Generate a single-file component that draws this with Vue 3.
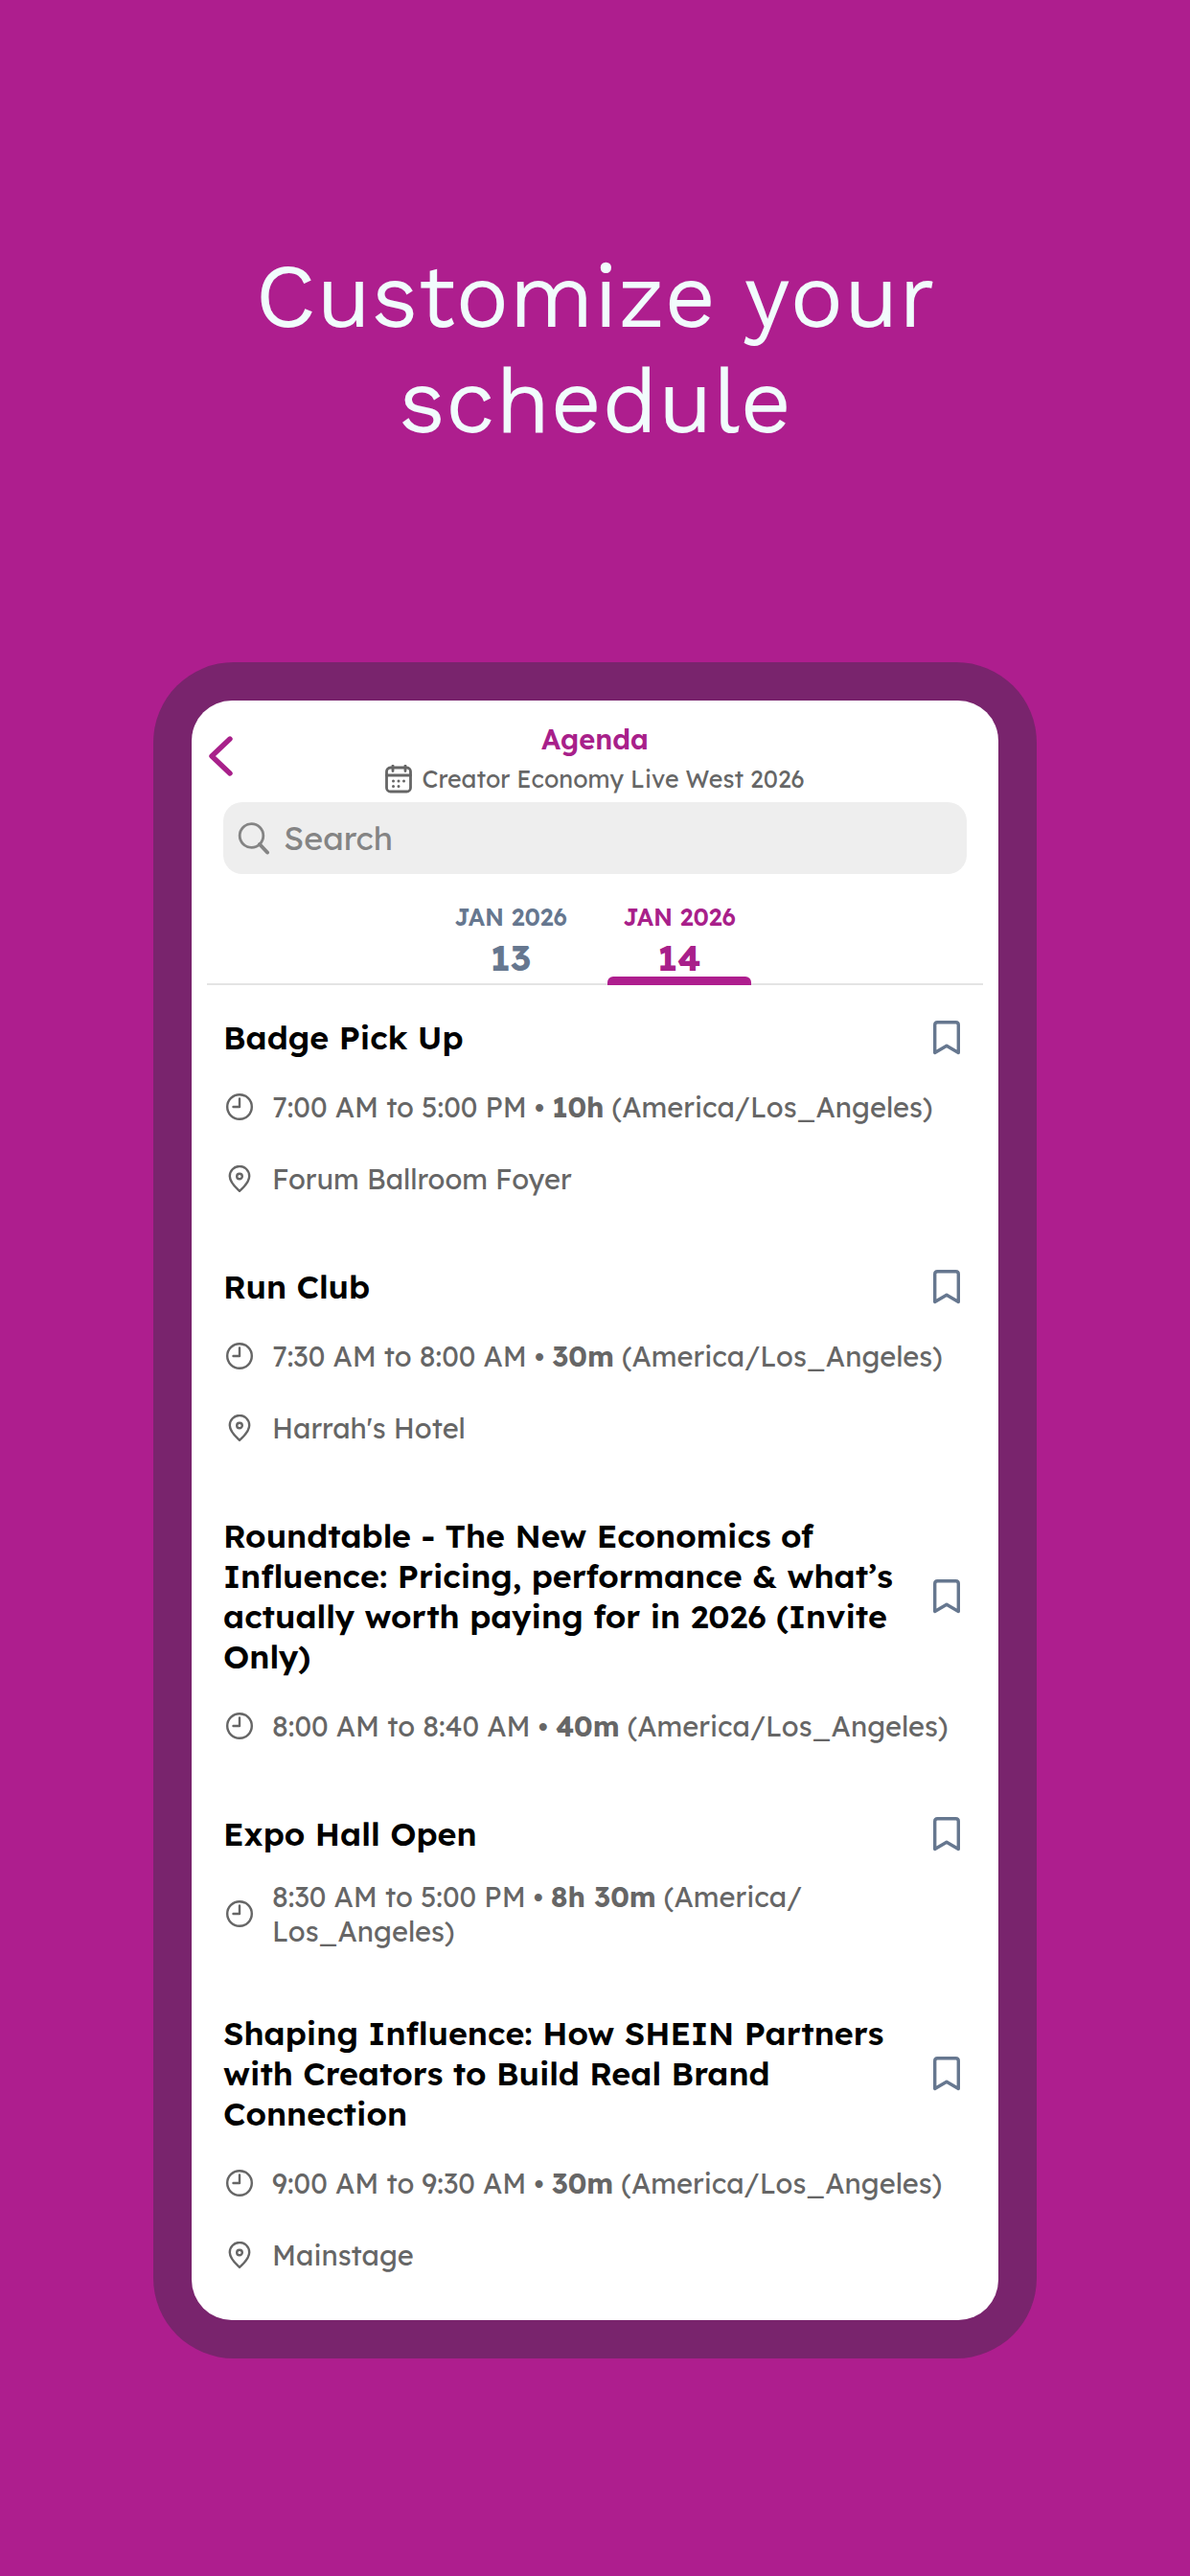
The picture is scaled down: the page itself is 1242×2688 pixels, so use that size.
<template>
  <main class="page">
    <h1 class="headline">Customize your schedule</h1>

    <div class="phone">
      <div class="screen">
        <!-- Header -->
        <header class="header">
          <button class="back" type="button" aria-label="Back">
            <svg class="back-icon" viewBox="0 0 26 42" fill="none">
              <path d="M23 3L4 21L23 39" stroke="currentColor" stroke-width="5.4" stroke-linecap="round" stroke-linejoin="round" />
            </svg>
          </button>
          <div class="header-text">
            <h2 class="header-title">Agenda</h2>
            <p class="event-name">
              <svg class="event-icon" viewBox="0 0 28 30" fill="none">
                <rect x="1.5" y="3" width="25" height="25" rx="4" stroke="currentColor" stroke-width="2.8" />
                <path d="M1.5 11H26.5M8 1V6.5M21 1V6.5" stroke="currentColor" stroke-width="2.8" stroke-linecap="round" />
                <path d="M8.5 17h.01M14 17h.01M19.5 17h.01M8.5 22.5h.01M14 22.5h.01" stroke="currentColor" stroke-width="3" stroke-linecap="round" />
              </svg>
              <span>Creator Economy Live West 2026</span>
            </p>
          </div>
        </header>

        <!-- Search -->
        <label class="search">
          <svg class="search-icon" viewBox="0 0 34 34" fill="none">
            <circle cx="14.5" cy="14" r="12.3" stroke="currentColor" stroke-width="2.8" />
            <path d="M23 23L31 31.5" stroke="currentColor" stroke-width="4" stroke-linecap="round" />
          </svg>
          <input v-model="query" class="search-input" type="text" placeholder="Search" aria-label="Search" />
        </label>

        <!-- Days -->
        <nav class="days">
          <button
            v-for="day in days"
            :key="day.number"
            type="button"
            class="day"
            :class="{ active: day.number === activeDay }"
            @click="activeDay = day.number"
          >
            <span class="day-month">{{ day.month }}</span>
            <span class="day-number">{{ day.number }}</span>
          </button>
        </nav>

        <!-- Sessions -->
        <ul class="sessions">
          <li v-for="session in filteredSessions" :key="session.title" class="session">
            <div class="session-head">
              <h3 class="session-title">{{ session.title }}</h3>
              <button
                type="button"
                class="bookmark"
                :class="{ saved: saved.includes(session.title) }"
                :aria-label="'Bookmark ' + session.title"
                @click="toggleSaved(session.title)"
              >
                <svg class="bookmark-icon" viewBox="0 0 28 36">
                  <path d="M1.7 33.5V4.5Q1.7 1.7 4.5 1.7H23.5Q26.3 1.7 26.3 4.5V33.5L14 26.2Z" stroke="currentColor" stroke-width="3.4" stroke-linejoin="round" />
                </svg>
              </button>
            </div>
            <div class="meta">
              <svg class="meta-icon" viewBox="0 0 28 28" fill="none">
                <circle cx="14" cy="14" r="12.8" stroke="currentColor" stroke-width="2.4" />
                <path d="M14 5.5V14H7.5" stroke="currentColor" stroke-width="2.4" stroke-linecap="round" stroke-linejoin="round" />
              </svg>
              <p class="meta-text">
                {{ session.start }} to {{ session.end }} • <strong>{{ session.duration }}</strong> (America/<wbr />Los_Angeles)
              </p>
            </div>
            <div v-if="session.place" class="meta">
              <svg class="meta-icon" viewBox="0 0 28 28" fill="none">
                <path d="M14 26.8C10.5 23.5 3.8 18 3.8 11.2A10.2 10.2 0 0 1 24.2 11.2C24.2 18 17.5 23.5 14 26.8Z" stroke="currentColor" stroke-width="2.4" stroke-linejoin="round" />
                <circle cx="14" cy="11.5" r="2.8" stroke="currentColor" stroke-width="2.4" />
              </svg>
              <p class="meta-text">{{ session.place }}</p>
            </div>
          </li>
        </ul>
      </div>
    </div>
  </main>
</template>

<script setup>
import { computed, ref } from 'vue';

const query = ref('');
const activeDay = ref('14');
const saved = ref([]);

const days = [
  { month: 'JAN 2026', number: '13' },
  { month: 'JAN 2026', number: '14' },
];

// no-break space between the time and AM/PM
const sessions = [
  {
    title: 'Badge Pick Up',
    start: '7:00\u00a0AM',
    end: '5:00\u00a0PM',
    duration: '10h',
    place: 'Forum Ballroom Foyer',
  },
  {
    title: 'Run Club',
    start: '7:30\u00a0AM',
    end: '8:00\u00a0AM',
    duration: '30m',
    place: "Harrah's Hotel",
  },
  {
    title: 'Roundtable - The New Economics of Influence: Pricing, performance & what’s actually worth paying for in 2026 (Invite Only)',
    start: '8:00\u00a0AM',
    end: '8:40\u00a0AM',
    duration: '40m',
  },
  {
    title: 'Expo Hall Open',
    start: '8:30\u00a0AM',
    end: '5:00\u00a0PM',
    duration: '8h 30m',
  },
  {
    title: 'Shaping Influence: How SHEIN Partners with Creators to Build Real Brand Connection',
    start: '9:00\u00a0AM',
    end: '9:30\u00a0AM',
    duration: '30m',
    place: 'Mainstage',
  },
];

const filteredSessions = computed(() =>
  sessions.filter((s) => s.title.toLowerCase().includes(query.value.toLowerCase()))
);

const toggleSaved = (title) => {
  const index = saved.value.indexOf(title);
  if (index > -1) {
    saved.value.splice(index, 1);
  } else {
    saved.value.push(title);
  }
};
</script>

<style>
body {
  background-color: #ae1e8e;
}
</style>

<style scoped>
.page {
  min-height: 100vh;
  box-sizing: border-box;
  padding: 255px 160px 227px;
  background-color: #ae1e8e;
  font-family: Lexend, Inter, sans-serif;
}

.page * {
  box-sizing: border-box;
}

button {
  padding: 0;
  border: none;
  background: none;
  font-family: inherit;
  cursor: pointer;
}

.headline {
  margin: 0 0 216px;
  color: #f1fcfc;
  font-family: 'Work Sans', Inter, sans-serif;
  font-size: 93px;
  font-weight: 400;
  line-height: 110px;
  text-align: center;
}

.phone {
  padding: 40px;
  border-radius: 84px;
  background-color: #79246d;
}

.screen {
  padding: 20px 0 10px;
  border-radius: 42px;
  background-color: #ffffff;
}

/* Header */
.header {
  display: grid;
  grid-template-columns: 60px 1fr 60px;
}

.back {
  height: 76px;
  display: flex;
  align-items: center;
  justify-content: center;
  color: #a8208a;
}

.back-icon {
  width: 26px;
  height: 42px;
}

.header-text {
  display: flex;
  flex-direction: column;
  align-items: center;
  gap: 2px;
}

.header-title {
  margin: 0;
  color: #a8208a;
  font-size: 29px;
  font-weight: 600;
  line-height: 40px;
}

.event-name {
  margin: 0;
  display: flex;
  align-items: center;
  gap: 10px;
  color: #666666;
  font-size: 25px;
  line-height: 40px;
}

.event-icon {
  width: 28px;
  height: 30px;
}

/* Search */
.search {
  display: flex;
  align-items: center;
  gap: 14px;
  height: 75px;
  margin: 4px 33px 0;
  padding: 0 15px;
  border-radius: 20px;
  background-color: #eeeeee;
  color: #848484;
}

.search-icon {
  width: 34px;
  height: 34px;
  flex-shrink: 0;
}

.search-input {
  flex: 1;
  min-width: 0;
  padding: 0;
  border: none;
  outline: none;
  background: none;
  color: #444444;
  font-family: inherit;
  font-size: 34px;
}

.search-input::placeholder {
  color: #848484;
  opacity: 1;
}

/* Days */
.days {
  display: flex;
  justify-content: center;
  gap: 26px;
  margin: 0 16px;
  padding-top: 27px;
  box-shadow: inset 0 -2px #e4e4e4;
}

.day {
  position: relative;
  width: 150px;
  padding-bottom: 7px;
  display: flex;
  flex-direction: column;
  align-items: center;
  gap: 2px;
  color: #66778f;
}

.day-month {
  font-size: 25px;
  font-weight: 600;
  line-height: 36px;
}

.day-number {
  font-size: 37px;
  font-weight: 700;
  line-height: 44px;
}

.day.active {
  color: #a8208a;
}

.day.active::after {
  content: '';
  position: absolute;
  left: 0;
  right: 0;
  bottom: 0;
  height: 9px;
  border-radius: 6px 6px 0 0;
  background-color: #ae1e8e;
}

/* Sessions */
.sessions {
  margin: 0;
  padding: 0 33px;
  list-style: none;
}

.session {
  display: flex;
  flex-direction: column;
  gap: 26px;
  padding: 34px 0;
}

.session-head {
  display: flex;
  align-items: center;
  justify-content: space-between;
  gap: 36px;
}

.session-title {
  margin: 0;
  color: #000000;
  font-size: 34px;
  font-weight: 600;
  line-height: 42px;
}

.bookmark {
  display: flex;
  flex-shrink: 0;
  margin-right: 7px;
  color: #66778f;
}

.bookmark-icon {
  width: 28px;
  height: 36px;
  fill: none;
}

.bookmark.saved .bookmark-icon {
  fill: currentColor;
}

.meta {
  display: flex;
  align-items: center;
  gap: 20px;
  min-height: 49px;
  padding-left: 3px;
  color: #666666;
}

.meta-icon {
  width: 28px;
  height: 28px;
  flex-shrink: 0;
}

.meta-text {
  margin: 0;
  font-size: 29px;
  line-height: 36px;
}

.meta-text strong {
  font-weight: 700;
}
</style>
